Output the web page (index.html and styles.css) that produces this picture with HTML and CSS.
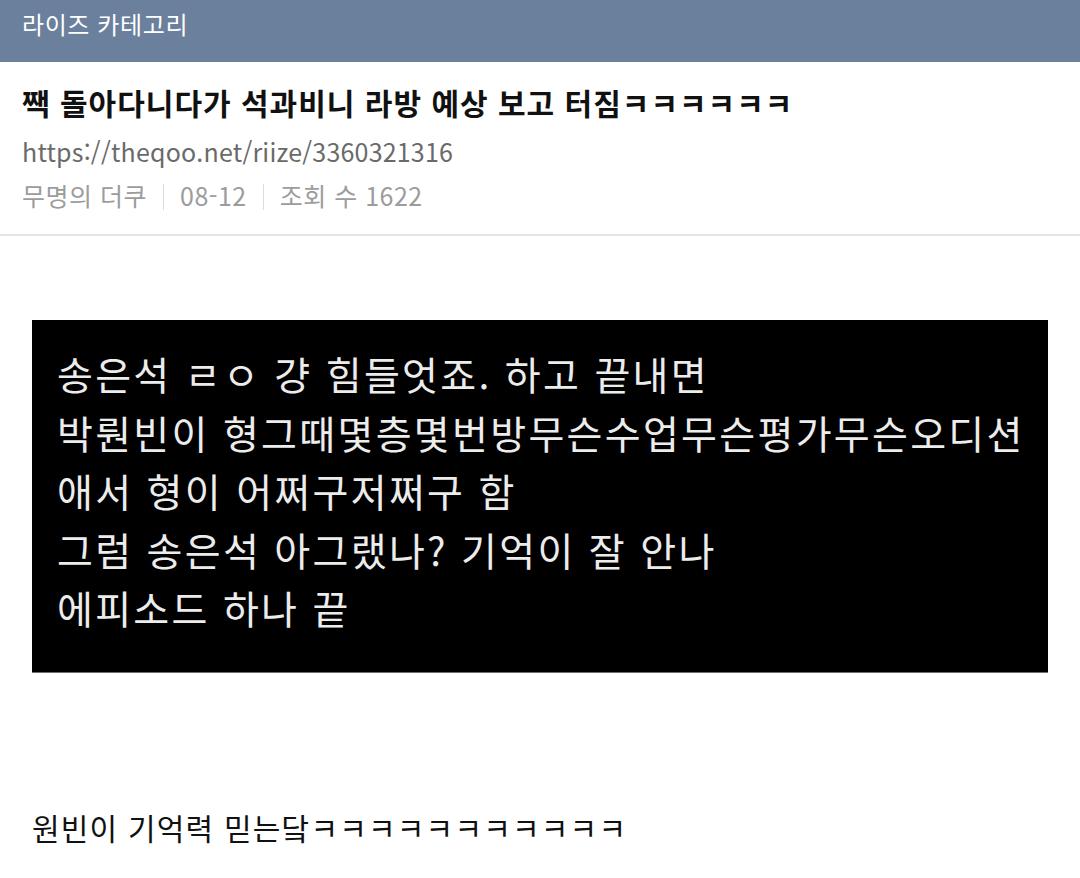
FILE: index.html
```html
<!DOCTYPE html>
<html lang="ko">
<head>
    <meta charset="UTF-8">
    <meta name="viewport" content="width=device-width, initial-scale=1.0">
    <title>라이즈 카테고리</title>
    <link rel="stylesheet" href="styles.css">
</head>
<body>
<div class="topbar">라이즈 카테고리</div>

<div class="post-head">
    <div class="post-title">짹 돌아다니다가 석과비니 라방 예상 보고 터짐ㅋㅋㅋㅋㅋㅋ</div>
    <div class="post-url">https://theqoo.net/riize/3360321316</div>
    <div class="post-meta">
        <span>무명의 더쿠</span>
        <span class="sep"></span>
        <span>08-12</span>
        <span class="sep"></span>
        <span>조회 수 1622</span>
    </div>
</div>

<div class="post-body">
    <div class="capture">
        송은석 ㄹㅇ 걍 힘들엇죠. 하고 끝내면<br>
        박뤈빈이 형그때몇층몇번방무슨수업무슨평가무슨오디션<br>
        애서 형이 어쩌구저쩌구 함<br>
        그럼 송은석 아그랬나? 기억이 잘 안나<br>
        에피소드 하나 끝
    </div>
    <p class="comment">원빈이 기억력 믿는닼ㅋㅋㅋㅋㅋㅋㅋㅋㅋㅋㅋ</p>
</div>
</body>
</html>
```

FILE: styles.css
```css
body {
    margin: 0;
    background-color: #fff;
    font-family: "Noto Sans CJK KR", "Noto Sans", sans-serif;
    color: #111;
}

.topbar {
    height: 62px;
    box-sizing: border-box;
    padding: 8px 22px 0;
    background-color: #6b809c;
    color: #fff;
    font-size: 24px;
    line-height: 32px;
    letter-spacing: 0.6px;
}

.post-head {
    padding: 20px 22px 22px;
    border-bottom: 2px solid #e4e4e4;
}

.post-title {
    font-size: 30px;
    font-weight: bold;
    line-height: 40px;
    letter-spacing: 1px;
    white-space: nowrap;
}

.post-url {
    margin-top: 12px;
    font-size: 25px;
    line-height: 34px;
    letter-spacing: 0.2px;
    color: #6a6a6a;
}

.post-meta {
    margin-top: 10px;
    display: flex;
    align-items: center;
    font-size: 25px;
    line-height: 34px;
    letter-spacing: 0.5px;
    color: #9c9c9c;
}

.post-meta .sep {
    width: 1px;
    height: 26px;
    margin: 4px 16px 0;
    background-color: #dcdcdc;
}

.post-body {
    padding: 84px 32px 0;
}

.capture {
    background-color: #000;
    border-bottom: 1px solid #6e6e6e;
    padding: 24px 25px 35px;
    color: #ececec;
    font-size: 39px;
    line-height: 58.5px;
    letter-spacing: 2.3px;
    white-space: nowrap;
}

.comment {
    margin: 134px 0 0;
    font-size: 30px;
    line-height: 40px;
    letter-spacing: 1.2px;
}
```
